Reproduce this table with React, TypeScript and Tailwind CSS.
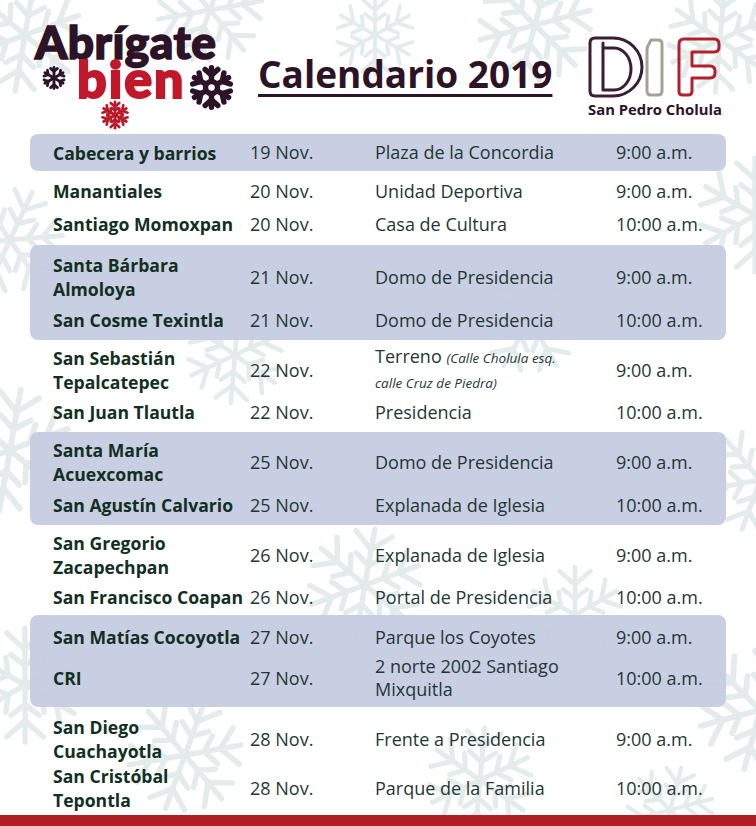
import React from 'react';

type Row = {
  name: string[];
  date: string;
  place: React.ReactNode;
  time: string;
  h: string;
};

type Group = {
  band: boolean;
  pad: string;
  rows: Row[];
};

const GROUPS: Group[] = [
  {
    band: true,
    pad: '',
    rows: [{ name: ['Cabecera y barrios'], date: '19 Nov.', place: 'Plaza de la Concordia', time: '9:00 a.m.', h: 'h-[37px]' }],
  },
  {
    band: false,
    pad: 'pt-[3px] pb-[5px]',
    rows: [
      { name: ['Manantiales'], date: '20 Nov.', place: 'Unidad Deportiva', time: '9:00 a.m.', h: 'h-[34px]' },
      { name: ['Santiago Momoxpan'], date: '20 Nov.', place: 'Casa de Cultura', time: '10:00 a.m.', h: 'h-[32px]' },
    ],
  },
  {
    band: true,
    pad: 'pt-[7px] pb-[2px]',
    rows: [
      { name: ['Santa Bárbara', 'Almoloya'], date: '21 Nov.', place: 'Domo de Presidencia', time: '9:00 a.m.', h: 'h-[50px]' },
      { name: ['San Cosme Texintla'], date: '21 Nov.', place: 'Domo de Presidencia', time: '10:00 a.m.', h: 'h-[36px]' },
    ],
  },
  {
    band: false,
    pad: 'pt-[5px] pb-[3px]',
    rows: [
      {
        name: ['San Sebastián', 'Tepalcatepec'],
        date: '22 Nov.',
        place: (
          <span className="block leading-[23px]">
            Terreno <span className="text-[13.5px] italic">(Calle Cholula esq.</span>
            <br />
            <span className="text-[13.5px] italic">calle Cruz de Piedra)</span>
          </span>
        ),
        time: '9:00 a.m.',
        h: 'h-[50px]',
      },
      { name: ['San Juan Tlautla'], date: '22 Nov.', place: 'Presidencia', time: '10:00 a.m.', h: 'h-[34px]' },
    ],
  },
  {
    band: true,
    pad: 'pt-[5px] pb-[2px]',
    rows: [
      { name: ['Santa María', 'Acuexcomac'], date: '25 Nov.', place: 'Domo de Presidencia', time: '9:00 a.m.', h: 'h-[50px]' },
      { name: ['San Agustín Calvario'], date: '25 Nov.', place: 'Explanada de Iglesia', time: '10:00 a.m.', h: 'h-[36px]' },
    ],
  },
  {
    band: false,
    pad: 'pt-[5px] pb-[1px]',
    rows: [
      { name: ['San Gregorio', 'Zacapechpan'], date: '26 Nov.', place: 'Explanada de Iglesia', time: '9:00 a.m.', h: 'h-[50px]' },
      { name: ['San Francisco Coapan'], date: '26 Nov.', place: 'Portal de Presidencia', time: '10:00 a.m.', h: 'h-[34px]' },
    ],
  },
  {
    band: true,
    pad: 'pt-[4px] pb-[8px]',
    rows: [
      { name: ['San Matías Cocoyotla'], date: '27 Nov.', place: 'Parque los Coyotes', time: '9:00 a.m.', h: 'h-[36px]' },
      {
        name: ['CRI'],
        date: '27 Nov.',
        place: (
          <span className="block leading-[23px]">
            2 norte 2002 Santiago
            <br />
            Mixquitla
          </span>
        ),
        time: '10:00 a.m.',
        h: 'h-[44px]',
      },
    ],
  },
  {
    band: false,
    pad: 'pt-[7px] pb-[3px]',
    rows: [
      { name: ['San Diego', 'Cuachayotla'], date: '28 Nov.', place: 'Frente a Presidencia', time: '9:00 a.m.', h: 'h-[50px]' },
      { name: ['San Cristóbal', 'Tepontla'], date: '28 Nov.', place: 'Parque de la Familia', time: '10:00 a.m.', h: 'h-[48px]' },
    ],
  },
];

// background flakes: [left, top, size, rotation]
const BG_FLAKES: number[][] = [
  [-40, -30, 130, 10],
  [150, -50, 120, 20],
  [330, -10, 90, 0],
  [470, -40, 130, 15],
  [660, -20, 120, 5],
  [-50, 180, 120, 25],
  [690, 150, 130, 0],
  [-60, 380, 140, 10],
  [700, 420, 120, 20],
  [-40, 620, 130, 0],
  [690, 640, 140, 15],
  [180, 300, 110, 5],
  [470, 260, 120, 30],
  [300, 520, 130, 10],
  [520, 560, 110, 0],
  [120, 690, 130, 20],
  [420, 720, 120, 5],
  [620, 760, 100, 15],
];

const Flake = ({ size, color, sw = 2.4, ring = false, double = false }: { size: number; color: string; sw?: number; ring?: boolean; double?: boolean }) => (
  <svg width={size} height={size} viewBox="-12 -12 24 24" className="block">
    <g stroke={color} strokeWidth={sw} strokeLinecap="round" strokeLinejoin="round" fill="none">
      {[0, 60, 120, 180, 240, 300].map((a) => (
        <g key={a} transform={`rotate(${a})`}>
          <path d={ring ? 'M0 -3.5 V-10.5' : 'M0 0 V-10.5'} />
          <path d="M-3.4 -9.6 L0 -6.6 L3.4 -9.6" />
          {double && <path d="M-2.6 -5.6 L0 -3.6 L2.6 -5.6" />}
        </g>
      ))}
      {ring && <circle cx="0" cy="0" r="3.2" />}
    </g>
  </svg>
);

const DifLogo = () => (
  <svg width="136" height="62" viewBox="0 0 136 62" className="block">
    <g fill="none" strokeWidth="3" strokeLinejoin="round" strokeLinecap="round">
      <path d="M3 7 Q3 2 8 2 H26 A29 29 0 0 1 26 60 H8 Q3 60 3 55 Z" stroke="#3c1d33" />
      <path d="M16 7 V54 H27 A17 21 0 0 0 27 12 H16" stroke="#3c1d33" />
      <path d="M64 4 H71 Q75 4 75 8 V55 Q75 59 71 59 H64 Q60 59 60 55 V14 Q60 10 62 8 Z" stroke="#a3a294" />
      <path d="M92 56 V8 Q92 3 97 3 H127 Q132 3 132 8 V11 Q132 16 127 16 H105 V30 H123 Q128 30 128 35 V37 Q128 42 123 42 H105 V55 Q105 59 101 59 H96 Q92 59 92 56 Z" stroke="#b3202c" />
    </g>
  </svg>
);

const Header = () => (
  <div className="flex h-[134px] items-start">
    <div className="ml-[35px] mt-[23px] flex w-[205px] flex-col">
      <span className="font-['Lato'] text-[46px] font-black leading-[38px] tracking-[0.5px] text-[#2c1327] [-webkit-text-stroke:1.6px_#2c1327]">
        Abrígate
      </span>
      <div className="flex items-start">
        <div className="ml-[7px] mt-[5px]">
          <Flake size={24} color="#2c1327" sw={2.8} />
        </div>
        <span className="ml-[11px] font-['Lato'] text-[52px] font-black leading-[34px] tracking-[2px] text-[#c1182b] [-webkit-text-stroke:2px_#c1182b]">
          bien
        </span>
        <div className="ml-[3px] mt-[4px]">
          <Flake size={45} color="#2c1327" sw={2.9} ring />
        </div>
      </div>
      <div className="ml-[65px] -mt-[10px]">
        <Flake size={30} color="#b81c2a" sw={2.2} double />
      </div>
    </div>
    <h1 className="ml-[18px] mt-[55px] font-['Open_Sans'] text-[37px] font-bold leading-none text-[#2c1327] underline decoration-[3px] underline-offset-[6px]">
      Calendario 2019
    </h1>
    <div className="ml-auto mr-[33px] mt-[36px] flex w-[136px] flex-col items-center">
      <DifLogo />
      <span className="mt-[4px] whitespace-nowrap font-['Open_Sans'] text-[14.8px] font-bold leading-none text-[#2c1327]">San Pedro Cholula</span>
    </div>
  </div>
);

const ScheduleRow = ({ row }: { row: Row }) => (
  <div className={`grid grid-cols-[197px_125px_241px_1fr] items-center ${row.h}`}>
    <div className="whitespace-nowrap text-[17.6px] font-bold leading-[24px] text-[#11301f]">
      {row.name.map((line) => (
        <div key={line}>{line}</div>
      ))}
    </div>
    <div className="text-[18px] text-[#1e3833]">{row.date}</div>
    <div className="whitespace-nowrap text-[18px] text-[#1e3833]">{row.place}</div>
    <div className="whitespace-nowrap text-[18px] text-[#1e3833]">{row.time}</div>
  </div>
);

export default function App() {
  return (
    <div className="relative h-[826px] w-[756px] overflow-hidden bg-white font-['Open_Sans',sans-serif]">
      <div className="pointer-events-none absolute inset-0">
        {BG_FLAKES.map(([left, top, size, rot], i) => (
          <div key={i} className="absolute opacity-60" style={{ left, top, transform: `rotate(${rot}deg)` }}>
            <Flake size={size} color="#d3e0df" sw={1} double />
          </div>
        ))}
      </div>
      <div className="relative flex h-full flex-col">
        <Header />
        <div className="flex flex-col">
          {GROUPS.map((group, i) => (
            <div
              key={i}
              className={`mx-[30px] pl-[23px] ${group.pad} ${group.band ? 'rounded-[8px] bg-[#c6cce1]/95' : ''}`}
            >
              {group.rows.map((row) => (
                <ScheduleRow key={row.name.join(' ')} row={row} />
              ))}
            </div>
          ))}
        </div>
        <div className="mt-auto h-[11px] bg-[#b11e26]" />
      </div>
    </div>
  );
}
